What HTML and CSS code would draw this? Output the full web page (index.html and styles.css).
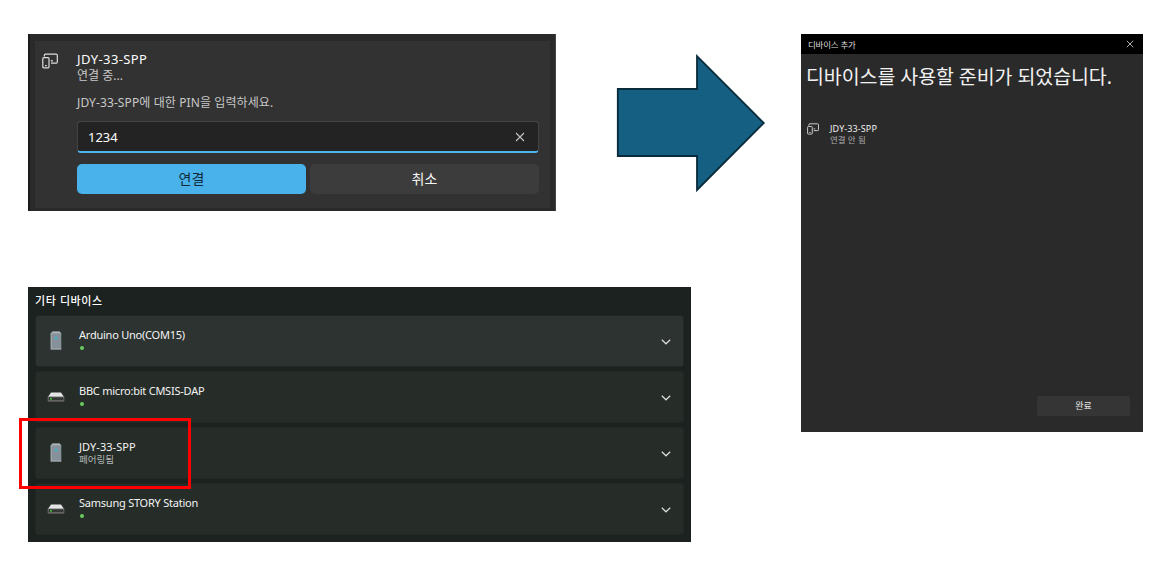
FILE: index.html
```html
<!DOCTYPE html>
<html lang="ko">
<head>
<meta charset="utf-8">
<title>디바이스 추가</title>
<link rel="stylesheet" href="styles.css">
</head>
<body>
<svg class="defs" width="0" height="0">
  <symbol id="linked" viewBox="0 0 16 16"><path d="M2.4 3.6V2.2Q2.4 1.1 3.5 1.1H14.2Q15.3 1.1 15.3 2.2V9.1Q15.3 10.2 14.2 10.2H9M8.8 7.9H11M1.8 4.7H6Q7 4.7 7 5.7V13.8Q7 14.8 6 14.8H1.8Q.8 14.8 .8 13.8V5.7Q.8 4.7 1.8 4.7ZM3 12.6H4.8" fill="none" stroke="#ddd" stroke-width="1.2"/></symbol>
  <symbol id="tower" viewBox="0 0 12 19"><path d="M2.5.5h7l1.8 2V18.5H.7V2.5z" fill="#86919a"/><path d="M2.5.5h7l1.8 2H.7z" fill="#aab0b4"/><path d="M.7 2.5h1V18H.7zM.7 17.5h10.6v1H.7z" fill="#a5abaf"/><path d="M4.5 7h3M6 5.5v3" stroke="#35bfdc"/></symbol>
  <symbol id="drive" viewBox="0 0 18 10"><path d="M4 .5h10L17 5H1z" fill="#e3e4e4"/><rect x=".7" y="4.5" width="16.6" height="5" rx=".8" fill="#777"/><rect x="1.5" y="5.3" width="15" height="3" fill="#353735"/><path d="M3.2 6.9h1.6" stroke="#2ed12f" stroke-width="1.8"/></symbol>
  <symbol id="chevron" viewBox="0 0 10 6"><path d="M.8 .8L5 4.8L9.2 .8" fill="none" stroke="#ddd" stroke-width="1.2"/></symbol>
  <symbol id="close" viewBox="0 0 10 10"><path d="M1 1L9 9M9 1L1 9" fill="none" stroke="#c4c4c4" stroke-width="1.1"/></symbol>
</svg>
<main class="board">
  <section class="pairing">
    <div class="pairing-card">
      <svg class="pairing-icon"><use href="#linked"/></svg>
      <div class="pairing-body">
        <div class="pairing-name">JDY-33-SPP</div>
        <div class="pairing-status">연결 중...</div>
        <div class="pairing-prompt">JDY-33-SPP에 대한 PIN을 입력하세요.</div>
        <div class="pin"><span>1234</span><svg class="pin-clear"><use href="#close"/></svg></div>
        <div class="actions"><div class="button primary">연결</div><div class="button">취소</div></div>
      </div>
    </div>
  </section>

  <svg class="arrow" viewBox="0 0 150 140"><path d="M1.8 36H81V3.2L147.8 70L81 137V103H1.8Z" fill="#156082" stroke="#092a3a" stroke-width="1.8"/></svg>

  <section class="dialog">
    <header class="titlebar"><span>디바이스 추가</span><svg class="dialog-close"><use href="#close"/></svg></header>
    <h1 class="dialog-heading">디바이스를 사용할 준비가 되었습니다.</h1>
    <div class="added">
      <svg class="added-icon"><use href="#linked"/></svg>
      <div><div class="added-name">JDY-33-SPP</div><div class="added-status">연결 안 됨</div></div>
    </div>
    <div class="done">완료</div>
  </section>

  <section class="devices">
    <h2 class="devices-heading">기타 디바이스</h2>
    <div class="rows">
      <div class="row first"><svg class="tower"><use href="#tower"/></svg><div class="label"><span class="name">Arduino Uno(COM15)</span><i class="dot"></i></div><svg class="chevron"><use href="#chevron"/></svg></div>
      <div class="row"><svg class="drive"><use href="#drive"/></svg><div class="label"><span class="name">BBC micro:bit CMSIS-DAP</span><i class="dot"></i></div><svg class="chevron"><use href="#chevron"/></svg></div>
      <div class="row"><svg class="tower"><use href="#tower"/></svg><div class="label"><span class="name wide">JDY-33-SPP</span><span class="paired">페어링됨</span></div><svg class="chevron"><use href="#chevron"/></svg></div>
      <div class="row"><svg class="drive"><use href="#drive"/></svg><div class="label"><span class="name">Samsung STORY Station</span><i class="dot"></i></div><svg class="chevron"><use href="#chevron"/></svg></div>
    </div>
    <div class="highlight"></div>
  </section>
</main>
</body>
</html>
```
FILE: styles.css
```css
* { box-sizing: border-box; }
body { margin: 0; background: #fff; font-family: "Noto Sans", "Noto Sans CJK KR", sans-serif; color: #fff; }
svg { display: block; flex: none; }
.defs { position: absolute; }
.board { display: grid; grid-template-columns: 528px 60px 75px 75px 35px 342px; grid-template-rows: 177px 76px 255px; padding: 34px 0 0 28px; white-space: nowrap; }

.pairing { grid-area: 1 / 1; background: #2a2a2a; border-left: 2px solid #1b1b1b; border-right: 1px solid #454545; padding: 7px 5px 3px; }
.pairing-card { height: 167px; background: #323232; display: flex; padding: 10px 11px 0 7px; }
.pairing-icon { width: 16px; height: 16px; margin: 2px 19px 0 0; }
.pairing-body { width: 462px; }
.pairing-name { font-size: 13px; line-height: 16px; letter-spacing: .4px; }
.pairing-status { font-size: 12px; line-height: 14px; margin-top: 2px; color: #c8c8c8; }
.pairing-prompt { font-size: 12px; line-height: 16px; margin-top: 12px; letter-spacing: .1px; color: #c8c8c8; }
.pin { height: 32px; margin-top: 10px; background: #232323; border: 1px solid #434343; border-bottom: 2px solid #4cb5ec; border-radius: 4px; display: flex; align-items: center; justify-content: space-between; padding: 0 13px 0 10px; font-size: 13px; }
.pin-clear { width: 10px; height: 10px; }
.actions { display: grid; grid-template-columns: 1fr 1fr; gap: 4px; margin-top: 11px; }
.button { height: 30px; line-height: 30px; border-radius: 5px; background: #3c3c3c; text-align: center; font-size: 14px; color: #f5f5f5; }
.primary { background: #49b2ea; color: #102a38; }

.arrow { grid-area: 1 / 3 / 2 / 5; width: 150px; height: 140px; margin-top: 19px; }

.dialog { grid-area: 1 / 6 / 4 / 7; height: 398px; background: #2a2a2a; display: flex; flex-direction: column; }
.titlebar { height: 20px; background: #000; display: flex; align-items: center; justify-content: space-between; padding: 0 9px 0 7px; font-size: 8.5px; letter-spacing: -.2px; color: #ddd; }
.dialog-close { width: 8px; height: 8px; }
.dialog-heading { margin: 10px 0 0 5px; font-size: 19.5px; line-height: 26px; font-weight: 400; letter-spacing: -.08px; color: #f2f2f2; }
.added { display: flex; margin: 33px 0 0 6px; }
.added-icon { width: 12px; height: 12px; margin: 0 11px 0 0; }
.added-name { font-size: 9px; line-height: 12px; letter-spacing: .1px; color: #f0f0f0; }
.added-status { font-size: 8.5px; line-height: 10px; color: #aaa; }
.done { width: 93px; height: 20px; line-height: 20px; margin: auto 13px 16px auto; border-radius: 2px; background: #353535; font-size: 9px; text-align: center; color: #e8e8e8; }

.devices { grid-area: 3 / 1 / 4 / 4; background: #1b221f; position: relative; padding: 6px 7px 7px; }
.devices-heading { margin: 0; height: 22px; font-size: 11px; line-height: 16px; font-weight: 500; letter-spacing: .6px; }
.rows { display: grid; gap: 4px; }
.row { height: 52px; background: #262d29; border: 1px solid #202823; border-radius: 3px; display: flex; align-items: center; padding: 0 12px 0 11px; }
.first { background: #2c3330; }
.tower { width: 12px; height: 19px; margin: -2px 17px 0 3px; }
.drive { width: 18px; height: 10px; margin-right: 14px; }
.label { flex: 1; height: 26px; }
.name { display: block; font-size: 11px; line-height: 14px; letter-spacing: -.23px; color: #f4f4f4; }
.wide { letter-spacing: .05px; }
.paired { display: block; font-size: 9.5px; line-height: 12px; color: #b4b7b5; }
.dot { display: block; width: 4px; height: 4px; border-radius: 50%; background: #69cc60; margin: 4px 0 0 1px; }
.chevron { width: 10px; height: 6px; margin-top: 1px; }
.highlight { position: absolute; left: -9px; top: 131px; width: 172px; height: 71px; border: 3px solid #f00; }
```
